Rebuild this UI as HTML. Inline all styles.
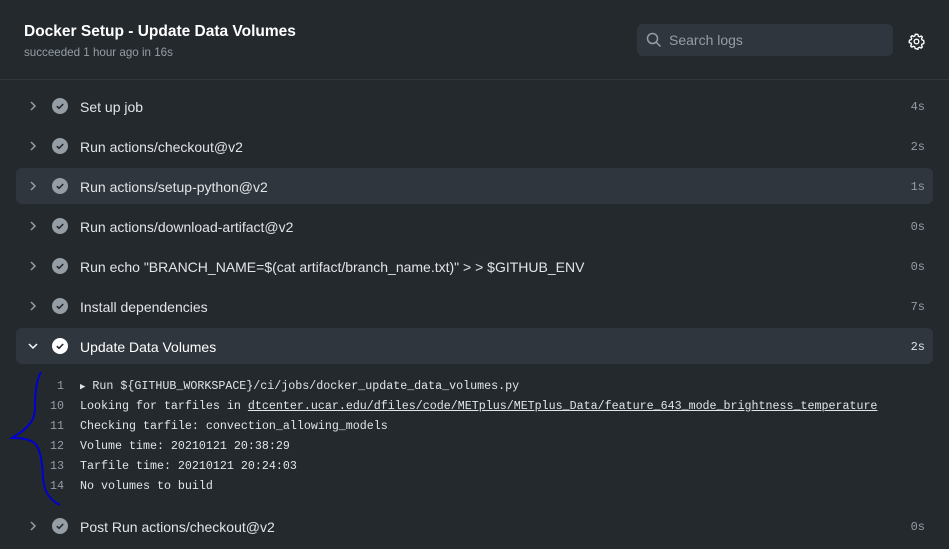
<!DOCTYPE html>
<html><head><meta charset="utf-8"><style>
*{margin:0;padding:0;box-sizing:border-box}
body{width:949px;height:549px;background:#24292e;font-family:"Liberation Sans",sans-serif;color:#e1e4e8;position:relative;overflow:hidden}
.title{position:absolute;left:24px;top:23px;font-size:15.5px;font-weight:bold;color:#fff}
.sub{position:absolute;left:24px;top:46px;font-size:11.6px;color:#959da5}
.search{position:absolute;left:637px;top:24px;width:256px;height:32px;background:#2f363d;border-radius:6px}
.search span{position:absolute;left:32px;top:8px;font-size:14px;color:#959da5}
.hr{position:absolute;left:0;top:79px;width:949px;height:1px;background:#30363d}
.row{position:absolute;left:16px;width:917px;height:36px;border-radius:6px}
.row.hl{background:#2f363d}
.row .chev{position:absolute;left:10px;top:11px}
.row .ck{position:absolute;left:36px;top:10px;width:16px;height:16px;border-radius:50%;background:#959da5}
.row.open .ck{background:#fff}
.row .lbl{position:absolute;left:64px;top:11px;font-size:14px;color:#e1e4e8}
.row .t{position:absolute;right:8px;top:12px;font-family:"Liberation Mono",monospace;font-size:12px;color:#959da5}
.log{position:absolute;left:0;font-family:"Liberation Mono",monospace;font-size:11.67px;color:#e1e4e8;height:20px;line-height:20px;white-space:pre}
.log .n{position:absolute;left:24px;width:40px;text-align:right;color:#959da5}
.log .c{position:absolute;left:80px}
u{text-decoration:underline}
</style></head><body>
<div class="title">Docker Setup - Update Data Volumes</div>
<div class="sub">succeeded 1 hour ago in 16s</div>
<div class="search"><svg style="position:absolute;left:9px;top:8px" width="16" height="16" viewBox="0 0 16 16"><circle cx="6.5" cy="6.5" r="5" fill="none" stroke="#959da5" stroke-width="1.5"/><path d="M10 10l4.5 4.5" stroke="#959da5" stroke-width="1.5"/></svg><span>Search logs</span></div>
<svg style="position:absolute;left:908px;top:33px" width="17" height="17" viewBox="0 0 16 16"><path d="M8 1.2l1.3.2.4 1.6 1.2.6 1.5-.8 1.1 1.1-.8 1.5.5 1.2 1.6.4.2 1.5-.2 1.5-1.6.4-.5 1.2.8 1.5-1.1 1.1-1.5-.8-1.2.5-.4 1.6L8 14.8l-1.3-.2-.4-1.6-1.2-.5-1.5.8-1.1-1.1.8-1.5-.5-1.2-1.6-.4L1.2 8l.2-1.3L3 6.3l.5-1.2-.8-1.5 1.1-1.1 1.5.8 1.2-.6.4-1.6z" fill="none" stroke="#fff" stroke-width="1.3" stroke-linejoin="round"/><circle cx="8" cy="8" r="2.2" fill="none" stroke="#fff" stroke-width="1.3"/></svg>
<div class="hr"></div>

<div class="row" style="top:88px"><svg class="chev" width="14" height="14" viewBox="0 0 14 14"><path d="M5 3l4 4-4 4" fill="none" stroke="#959da5" stroke-width="1.5"/></svg><div class="ck"><svg width="16" height="16" viewBox="0 0 16 16"><path d="M4.8 8.2l2.2 2.1 4.2-4.3" fill="none" stroke="#24292e" stroke-width="1.6"/></svg></div><div class="lbl">Set up job</div><div class="t">4s</div></div>
<div class="row" style="top:128px"><svg class="chev" width="14" height="14" viewBox="0 0 14 14"><path d="M5 3l4 4-4 4" fill="none" stroke="#959da5" stroke-width="1.5"/></svg><div class="ck"><svg width="16" height="16" viewBox="0 0 16 16"><path d="M4.8 8.2l2.2 2.1 4.2-4.3" fill="none" stroke="#24292e" stroke-width="1.6"/></svg></div><div class="lbl">Run actions/checkout@v2</div><div class="t">2s</div></div>
<div class="row hl" style="top:168px"><svg class="chev" width="14" height="14" viewBox="0 0 14 14"><path d="M5 3l4 4-4 4" fill="none" stroke="#959da5" stroke-width="1.5"/></svg><div class="ck"><svg width="16" height="16" viewBox="0 0 16 16"><path d="M4.8 8.2l2.2 2.1 4.2-4.3" fill="none" stroke="#24292e" stroke-width="1.6"/></svg></div><div class="lbl">Run actions/setup-python@v2</div><div class="t">1s</div></div>
<div class="row" style="top:208px"><svg class="chev" width="14" height="14" viewBox="0 0 14 14"><path d="M5 3l4 4-4 4" fill="none" stroke="#959da5" stroke-width="1.5"/></svg><div class="ck"><svg width="16" height="16" viewBox="0 0 16 16"><path d="M4.8 8.2l2.2 2.1 4.2-4.3" fill="none" stroke="#24292e" stroke-width="1.6"/></svg></div><div class="lbl">Run actions/download-artifact@v2</div><div class="t">0s</div></div>
<div class="row" style="top:248px"><svg class="chev" width="14" height="14" viewBox="0 0 14 14"><path d="M5 3l4 4-4 4" fill="none" stroke="#959da5" stroke-width="1.5"/></svg><div class="ck"><svg width="16" height="16" viewBox="0 0 16 16"><path d="M4.8 8.2l2.2 2.1 4.2-4.3" fill="none" stroke="#24292e" stroke-width="1.6"/></svg></div><div class="lbl">Run echo "BRANCH_NAME=$(cat artifact/branch_name.txt)" &gt; &gt; $GITHUB_ENV</div><div class="t">0s</div></div>
<div class="row" style="top:288px"><svg class="chev" width="14" height="14" viewBox="0 0 14 14"><path d="M5 3l4 4-4 4" fill="none" stroke="#959da5" stroke-width="1.5"/></svg><div class="ck"><svg width="16" height="16" viewBox="0 0 16 16"><path d="M4.8 8.2l2.2 2.1 4.2-4.3" fill="none" stroke="#24292e" stroke-width="1.6"/></svg></div><div class="lbl">Install dependencies</div><div class="t">7s</div></div>
<div class="row hl open" style="top:328px"><svg class="chev" width="14" height="14" viewBox="0 0 14 14"><path d="M3 5l4 4 4-4" fill="none" stroke="#fff" stroke-width="1.5"/></svg><div class="ck"><svg width="16" height="16" viewBox="0 0 16 16"><path d="M4.8 8.2l2.2 2.1 4.2-4.3" fill="none" stroke="#24292e" stroke-width="1.6"/></svg></div><div class="lbl" style="color:#fff">Update Data Volumes</div><div class="t" style="color:#e1e4e8">2s</div></div>

<div class="log" style="top:376px"><span class="n">1</span><span class="c"><span style="font-size:9px;color:#e1e4e8">▶</span> Run ${GITHUB_WORKSPACE}/ci/jobs/docker_update_data_volumes.py</span></div>
<div class="log" style="top:396px"><span class="n">10</span><span class="c">Looking for tarfiles in <u>dtcenter.ucar.edu/dfiles/code/METplus/METplus_Data/feature_643_mode_brightness_temperature</u></span></div>
<div class="log" style="top:416px"><span class="n">11</span><span class="c">Checking tarfile: convection_allowing_models</span></div>
<div class="log" style="top:436px"><span class="n">12</span><span class="c">Volume time: 20210121 20:38:29</span></div>
<div class="log" style="top:456px"><span class="n">13</span><span class="c">Tarfile time: 20210121 20:24:03</span></div>
<div class="log" style="top:476px"><span class="n">14</span><span class="c">No volumes to build</span></div>

<svg style="position:absolute;left:0;top:360px" width="80" height="170"><path d="M41 12 C36 20 35 35 35 50 C34 60 30 64 26 68 C22 72 16 75 12 78 C18 78 26 78 33 82 C40 86 42 100 43 118 C44 132 50 140 60 145" fill="none" stroke="#0000d0" stroke-width="2"/></svg>

<div class="row" style="top:508px"><svg class="chev" width="14" height="14" viewBox="0 0 14 14"><path d="M5 3l4 4-4 4" fill="none" stroke="#959da5" stroke-width="1.5"/></svg><div class="ck"><svg width="16" height="16" viewBox="0 0 16 16"><path d="M4.8 8.2l2.2 2.1 4.2-4.3" fill="none" stroke="#24292e" stroke-width="1.6"/></svg></div><div class="lbl">Post Run actions/checkout@v2</div><div class="t">0s</div></div>
</body></html>
